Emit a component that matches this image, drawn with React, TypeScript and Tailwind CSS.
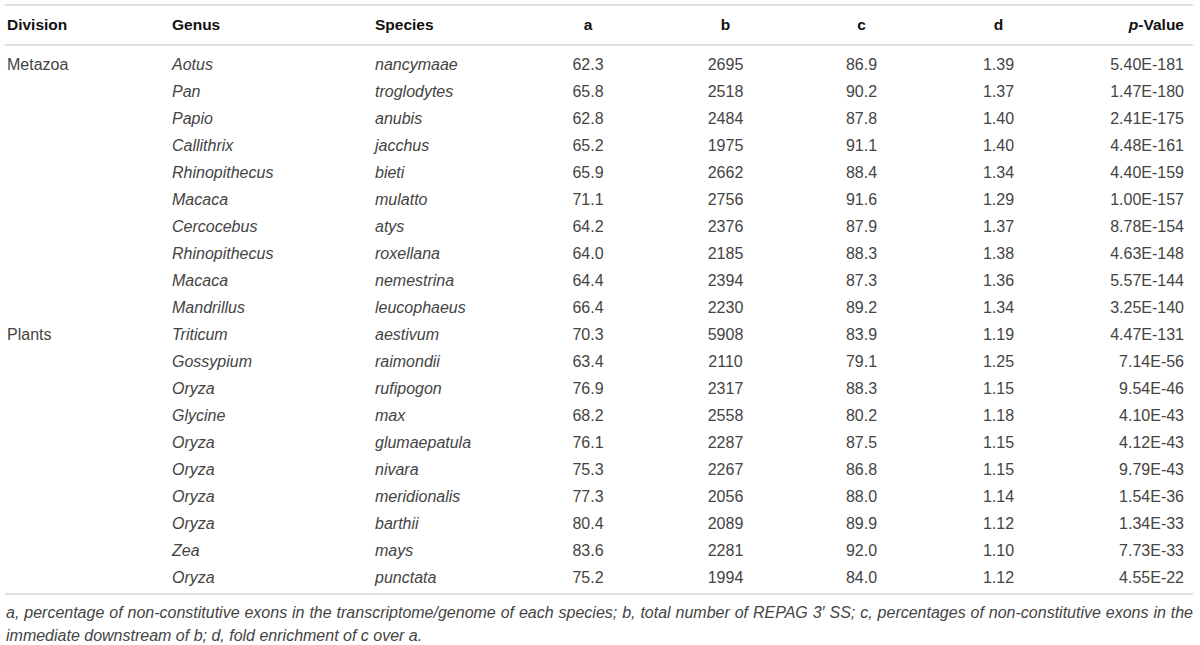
import React from "react";

type Row = [string, string, string, string, string, string, string, string];

const rows: Row[] = [
  ["Metazoa", "Aotus", "nancymaae", "62.3", "2695", "86.9", "1.39", "5.40E-181"],
  ["", "Pan", "troglodytes", "65.8", "2518", "90.2", "1.37", "1.47E-180"],
  ["", "Papio", "anubis", "62.8", "2484", "87.8", "1.40", "2.41E-175"],
  ["", "Callithrix", "jacchus", "65.2", "1975", "91.1", "1.40", "4.48E-161"],
  ["", "Rhinopithecus", "bieti", "65.9", "2662", "88.4", "1.34", "4.40E-159"],
  ["", "Macaca", "mulatto", "71.1", "2756", "91.6", "1.29", "1.00E-157"],
  ["", "Cercocebus", "atys", "64.2", "2376", "87.9", "1.37", "8.78E-154"],
  ["", "Rhinopithecus", "roxellana", "64.0", "2185", "88.3", "1.38", "4.63E-148"],
  ["", "Macaca", "nemestrina", "64.4", "2394", "87.3", "1.36", "5.57E-144"],
  ["", "Mandrillus", "leucophaeus", "66.4", "2230", "89.2", "1.34", "3.25E-140"],
  ["Plants", "Triticum", "aestivum", "70.3", "5908", "83.9", "1.19", "4.47E-131"],
  ["", "Gossypium", "raimondii", "63.4", "2110", "79.1", "1.25", "7.14E-56"],
  ["", "Oryza", "rufipogon", "76.9", "2317", "88.3", "1.15", "9.54E-46"],
  ["", "Glycine", "max", "68.2", "2558", "80.2", "1.18", "4.10E-43"],
  ["", "Oryza", "glumaepatula", "76.1", "2287", "87.5", "1.15", "4.12E-43"],
  ["", "Oryza", "nivara", "75.3", "2267", "86.8", "1.15", "9.79E-43"],
  ["", "Oryza", "meridionalis", "77.3", "2056", "88.0", "1.14", "1.54E-36"],
  ["", "Oryza", "barthii", "80.4", "2089", "89.9", "1.12", "1.34E-33"],
  ["", "Zea", "mays", "83.6", "2281", "92.0", "1.10", "7.73E-33"],
  ["", "Oryza", "punctata", "75.2", "1994", "84.0", "1.12", "4.55E-22"],
];

const grid =
  "grid grid-cols-[165px_203px_143px_140px_135px_137px_137px_117px] pl-[2px] pr-[9px]";

export default function App() {
  return (
    <div
      className="w-[1200px] h-[645px] bg-white overflow-hidden"
      style={{ fontFamily: '"Liberation Sans", Arial, sans-serif' }}
    >
      <div className="ml-[5px] w-[1188px] pt-[4px]">
        <div className={`${grid} border-t-2 border-b-2 border-[#e0e0e0] h-[42px] items-center text-[15.5px] font-bold text-[#111]`}>
          <div>Division</div>
          <div>Genus</div>
          <div>Species</div>
          <div className="text-center">a</div>
          <div className="text-center">b</div>
          <div className="text-center">c</div>
          <div className="text-center">d</div>
          <div className="text-right">
            <span className="italic">p</span>-Value
          </div>
        </div>
        <div className="pt-[5px] pb-[2px] border-b-2 border-[#e0e0e0]">
          {rows.map((r, i) => (
            <div
              key={i}
              className={`${grid} h-[27px] items-center text-[16px] text-[#444]`}
            >
              <div>{r[0]}</div>
              <div className="italic">{r[1]}</div>
              <div className="italic">{r[2]}</div>
              <div className="text-center">{r[3]}</div>
              <div className="text-center">{r[4]}</div>
              <div className="text-center">{r[5]}</div>
              <div className="text-center">{r[6]}</div>
              <div className="text-right">{r[7]}</div>
            </div>
          ))}
        </div>
        <p className="mt-[6px] pl-[1px] text-[16px] leading-[23px] italic text-[#444] text-justify">
          a, percentage of non-constitutive exons in the transcriptome/genome of
          each species; b, total number of REPAG 3′ SS; c, percentages of
          non-constitutive exons in the immediate downstream of b; d, fold
          enrichment of c over a.
        </p>
      </div>
    </div>
  );
}
